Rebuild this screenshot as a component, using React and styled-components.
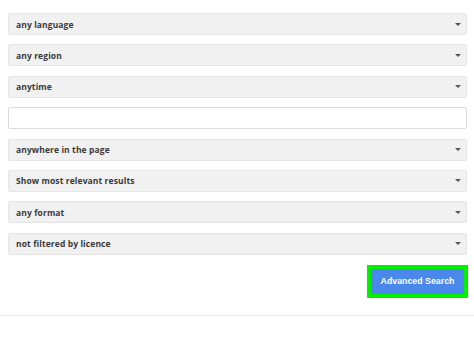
import React from "react";
import styled, { createGlobalStyle } from "styled-components";

const Global = createGlobalStyle`
  html, body { margin: 0; padding: 0; background: #fff; }
  body { width: 474px; height: 355px; overflow: hidden; }
`;

const Page = styled.div`
  display: flex;
  flex-direction: column;
`;

const Form = styled.div`
  display: flex;
  flex-direction: column;
  gap: 9.4px;
  padding: 13px 7px 0 8px;
`;

const Select = styled.div`
  height: 22px;
  box-sizing: border-box;
  display: flex;
  align-items: center;
  justify-content: space-between;
  padding: 0 5px 0 7px;
  background: #f1f1f1;
  border: 1px solid #e6e6e6;
  border-radius: 2px;
  font-family: "Open Sans", sans-serif;
  font-weight: 700;
  font-size: 8.5px;
  letter-spacing: 0.1px;
  color: #3a3a3a;
`;

const Arrow = styled.span`
  width: 0;
  height: 0;
  border-left: 3px solid transparent;
  border-right: 3px solid transparent;
  border-top: 3px solid #555;
`;

const Input = styled.div`
  height: 22px;
  box-sizing: border-box;
  background: #fff;
  border: 1px solid #dcdcdc;
  border-radius: 2px;
`;

const Actions = styled.div`
  display: flex;
  justify-content: flex-end;
  padding: 10px 6px 0 0;
`;

const Button = styled.div`
  border: 4px solid #00f000;
  background: #4a88ec;
  width: 101px;
  height: 33px;
  box-sizing: border-box;
  display: flex;
  align-items: center;
  justify-content: center;
  font-family: "Liberation Sans", Arial, sans-serif;
  font-weight: 700;
  font-size: 8.8px;
  color: #fff;
`;

const Divider = styled.div`
  margin-top: 17px;
  height: 1px;
  background: #ececec;
`;

const options = [
  "any language",
  "any region",
  "anytime",
  null,
  "anywhere in the page",
  "Show most relevant results",
  "any format",
  "not filtered by licence",
];

export default function App() {
  return (
    <Page>
      <Global />
      <Form>
        {options.map((o, i) =>
          o === null ? (
            <Input key={i} />
          ) : (
            <Select key={i}>
              <span>{o}</span>
              <Arrow />
            </Select>
          )
        )}
      </Form>
      <Actions>
        <Button>Advanced Search</Button>
      </Actions>
      <Divider />
    </Page>
  );
}
